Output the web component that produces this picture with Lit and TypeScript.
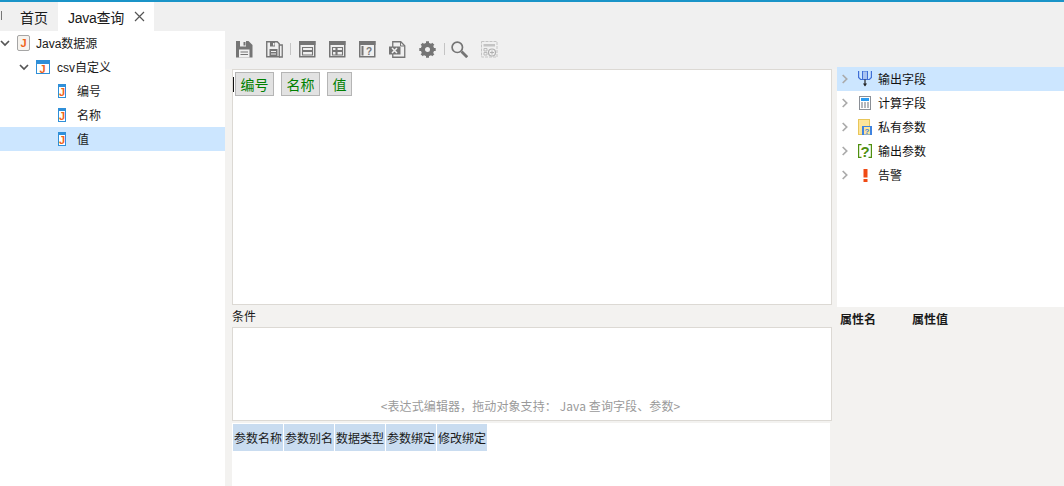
import { LitElement, html, css, svg } from "lit";
import { customElement } from "lit/decorators.js";

const chev = (open: boolean, c = "#555") => html`<svg class="chev" width="10" height="10" viewBox="0 0 10 10"><path d=${open ? "M1 3l4 4 4-4" : "M2.7 1l4 4-4 4"} fill="none" stroke=${c} stroke-width="1.7"/></svg>`;

const jDoc = html`<svg width="14" height="16" viewBox="0 0 14 16"><rect x=".5" y=".5" width="12" height="15" rx="1.5" fill="#f6f3ee" stroke="#a5a5a5"/><text x="6.5" y="11.5" text-anchor="middle" class="j">J</text></svg>`;
const jTable = html`<svg width="14" height="14" viewBox="0 0 14 14"><rect x=".5" y=".5" width="13" height="13" fill="#fff" stroke="#2f8fd8"/><rect x="1" y="1" width="12" height="3" fill="#2f8fd8"/><text x="6.5" y="12.5" text-anchor="middle" class="j">J</text></svg>`;
const jField = html`<svg width="8" height="14" viewBox="0 0 8 14"><rect x=".5" y=".5" width="7" height="13" fill="#fff" stroke="#2f8fd8"/><rect x="1" y="1" width="6" height="2" fill="#2f8fd8"/><text x="4" y="12" text-anchor="middle" class="j">J</text></svg>`;

const G = "#757575";
const L = "#f0f0f0";
const tb = (body: unknown) => html`<svg width="17" height="17" viewBox="0 0 17 17">${body}</svg>`;
const titled = (inner: unknown) => svg`<rect x=".75" y=".75" width="15" height="15" fill="none" stroke="${G}" stroke-width="1.5"/><rect x="0" y="0" width="16.5" height="4" fill="${G}"/>${inner}`;
const save = tb(svg`<path d="M0 0h12.5L16.5 4v12.5H0z" fill="${G}"/><path d="M4 0h6v5.5H4z" fill="${L}"/><path d="M7.5 1h2v3.5h-2z" fill="${G}"/><path d="M3 8.5h10.5v8H3z" fill="${L}"/><path d="M4.5 11h7.5M4.5 13.5h7.5" stroke="${G}" stroke-width="1.2"/>`);
const saveAs = tb(svg`<path d="M.75.75h10.5l2 2v13h-12.5z" fill="${L}" stroke="${G}" stroke-width="1.4"/><path d="M13 4h3.25v12H13" fill="none" stroke="${G}" stroke-width="1.3"/><path d="M4 1h5v4.5H4zM3.5 8h8v7.5h-8z" fill="${G}"/><path d="M7 2h1.5v2.5H7z" fill="${L}"/><path d="M5 10.5h5M5 13h5" stroke="${L}" stroke-width="1.1"/>`);
const win1 = tb(titled(svg`<path d="M3.5 6.5h10v3h-10zM3.5 10.5h10v3.5h-10z" fill="none" stroke="${G}" stroke-width="1.1"/>`));
const win2 = tb(titled(svg`<path d="M3.5 6.5h3.5v3H3.5zM3.5 10.5h3.5v3.5H3.5zM8 6.5h5.5v3H8zM8 10.5h5.5v3.5H8z" fill="none" stroke="${G}" stroke-width="1.1"/>`));
const win3 = tb(titled(svg`<path d="M3.5 5v9.5" stroke="${G}" stroke-width="2"/><text x="10" y="14" text-anchor="middle" class="tq">?</text>`));
const xls = tb(svg`<path d="M3.75.75h8l4 4v11.5h-12z" fill="${L}" stroke="${G}" stroke-width="1.3"/><path d="M11.5 1v4h4" fill="none" stroke="${G}"/><rect x="0" y="5.5" width="11.5" height="8" fill="${G}"/><path d="M3 7l5 5M8 7l-5 5" stroke="${L}" stroke-width="1.5"/>`);
const gear = tb(svg`<circle cx="8.5" cy="8.5" r="4.6" fill="none" stroke="${G}" stroke-width="4.2"/><path d="M8.5 .3v3.4M8.5 13.3v3.4M.3 8.5h3.4M13.3 8.5h3.4M2.7 2.7l2.4 2.4M11.9 11.9l2.4 2.4M14.3 2.7l-2.4 2.4M5.1 11.9l-2.4 2.4" stroke="${G}" stroke-width="3"/>`);
const search = tb(svg`<circle cx="6.3" cy="6.3" r="5.2" fill="none" stroke="${G}" stroke-width="1.7"/><path d="M10.5 10.5l5.7 5.7" stroke="${G}" stroke-width="2.8"/>`);
const addDis = tb(svg`<rect x=".5" y=".5" width="15.5" height="15.5" fill="none" stroke="#c4c4c4" stroke-dasharray="3 1"/><rect x="2.5" y="3" width="11.5" height="2.5" fill="#c4c4c4"/><path d="M3 7.5h3v2.5H3zM3 11.5h3V14H3z" fill="none" stroke="#bbb"/><circle cx="11" cy="11.5" r="3.5" fill="${L}" stroke="#b0b0b0" stroke-width="1.2"/><path d="M9 11.5h4M11 9.5v4" stroke="#b0b0b0"/>`);

const outIcon = html`<svg width="14" height="16" viewBox="0 0 14 16"><path d="M.6 0v6.5l2 2h8.8l2-2V0" fill="none" stroke="#3f6fd6" stroke-width="1.2"/><rect x="4.5" y="0" width="5" height="8.5" fill="#a9c3f0" stroke="#3f6fd6"/><path d="M7 8.5v6" stroke="#222" stroke-width="1.2"/><path d="M5 12.5l2 3 2-3z" fill="#222"/></svg>`;
const calcIcon = html`<svg width="12" height="14" viewBox="0 0 12 14"><rect x=".5" y=".5" width="11" height="13" fill="#fff" stroke="#8a8f96"/><rect x="2" y="2" width="8" height="3" fill="#2c9cf0"/><path d="M2 7h2M5 7h2M8 7h2M2 9h2M5 9h2M8 9h2M2 11h2M5 11h2M8 11h2" stroke="#6a7078"/></svg>`;
const privIcon = html`<svg width="14" height="16" viewBox="0 0 14 16"><rect x=".5" y=".5" width="11" height="15" fill="#fde59a" stroke="#e8c65a"/><rect x="4" y="7" width="10" height="9" fill="#3f83e0"/><rect x="6" y="8" width="6" height="7.5" fill="#fde59a"/><text x="9" y="14.5" text-anchor="middle" class="q">?</text></svg>`;
const outParam = html`<svg width="14" height="18" viewBox="0 -2 14 18"><path d="M3.5 .6H.6v12.8h2.9M10.5 .6h2.9v12.8h-2.9" fill="none" stroke="#4f9010" stroke-width="1.2"/><text x="7" y="12.5" text-anchor="middle" class="qg">?</text></svg>`;
const warn = html`<svg width="5" height="13" viewBox="0 0 5 13"><rect x=".5" y="0" width="4" height="8.5" fill="#f04a14"/><rect x=".5" y="10" width="4" height="3" fill="#f04a14"/></svg>`;

@customElement("app-root")
export class AppRoot extends LitElement {
  static styles = css`
    :host { display: block; width: 1064px; height: 486px; overflow: hidden; background: #f3f2f0; font-family: "Noto Sans CJK SC", "Liberation Sans", sans-serif; font-size: 12px; color: #1a1a1a; }
    text.j { font: bold 11px "Liberation Sans", sans-serif; fill: #f0641a; }
    text.q { font: bold 8px "Liberation Sans", sans-serif; fill: #3f83e0; }
    text.qg { font: bold 15px "Liberation Sans", sans-serif; fill: #4f9010; }
    text.tq { font: bold 10px "Liberation Sans", sans-serif; fill: #757575; }
    .tabs { height: 29px; border-top: 2px solid #1a94c8; background: #f0f0f0; display: flex; font-size: 14px; box-sizing: content-box; }
    .sep { width: 1px; height: 9px; background: #777; margin: 9px 0 0 1px; }
    .tab { height: 29px; display: flex; align-items: center; box-sizing: border-box; }
    .home { padding: 0 10px 0 18px; }
    .cur { background: #fff; width: 96px; padding-left: 10px; gap: 10px; }
    .cur span { font-family: "Liberation Sans", "Noto Sans CJK SC", sans-serif; letter-spacing: -.25px; }
    .main { display: flex; height: 455px; }
    .tree { width: 225px; background: #fff; flex: none; }
    .row { height: 24px; display: flex; align-items: center; font-size: 12px; box-sizing: border-box; }
    .row span { position: relative; top: -1px; }
    .r0 .chev { margin-right: 7px; }
    .r0 svg + svg { margin-right: 5px; }
    .r1 { padding-left: 19px; }
    .r1 .chev { margin-right: 7px; }
    .r1 svg + svg { margin-right: 7px; }
    .r2 { padding-left: 58px; }
    .r2 svg { margin-right: 11px; }
    .lat { font-family: "Liberation Sans", "Noto Sans CJK SC", sans-serif; }
    .sel { background: #cce6ff; }
    .center { width: 600px; margin-left: 7px; flex: none; display: flex; flex-direction: column; }
    .toolbar { height: 38px; display: flex; align-items: center; background: #f0f0f0; margin-left: -7px; padding: 0 0 2px 11px; box-sizing: border-box; width: 1064px; }
    .tool { width: 30px; height: 17px; flex: none; }
    .tsep { width: 1px; height: 12px; background: #c4c4c4; flex: none; }
    .s1 { margin: 0 8px 0 -6px; }
    .s2 { margin: 0 6px 0 -5px; }
    .editor { height: 236px; box-sizing: border-box; background: #fff; border: 1px solid #dcd9d4; display: flex; gap: 7px; padding: 2px 0 0 2px; align-items: flex-start; position: relative; }
    .caret { position: absolute; left: 0; top: 7px; width: 1px; height: 15px; background: #111; }
    .chip { height: 24px; padding: 0 4.5px; box-sizing: border-box; background: #e2e2e2; border: 1px solid #b5b5b5; color: #008000; font-size: 14px; display: flex; align-items: center; line-height: 1; }
    .lbl { height: 22px; display: flex; align-items: center; font-size: 12px; box-sizing: border-box; padding-bottom: 2px; }
    .expr { height: 94px; box-sizing: border-box; background: #fff; border: 1px solid #dcd9d4; display: flex; align-items: flex-end; justify-content: center; font-size: 12px; line-height: 16px; color: #9a9a9a; padding: 0 3px 6px 0; letter-spacing: .1px; }
    .params { margin-top: 2px; flex: 1; background: #fff; width: 598px; display: flex; gap: 1px; align-items: flex-start; padding: 1px 0 0 1px; box-sizing: border-box; }
    .ph { width: 50px; height: 27px; background: #c9dcf0; display: flex; align-items: center; justify-content: center; font-size: 12px; white-space: nowrap; }
    .right { margin-left: 5px; flex: 1; display: flex; flex-direction: column; margin-top: 36px; z-index: 1; }
    .rtree { height: 240px; background: #fff; }
    .rrow { height: 24px; padding-left: 3px; display: flex; align-items: center; font-size: 12px; color: #111; }
    .rrow .ic { width: 16px; height: 18px; display: flex; align-items: center; justify-content: center; margin: 0 5px 0 7px; flex: none; }
    .rrow span.t { position: relative; top: -1px; }
    .props { flex: 1; display: flex; padding: 3px 0 0 3px; font-weight: 700; font-size: 12px; gap: 36px; align-items: flex-start; }
  `;

  render() {
    const rows: [unknown, string][] = [
      [outIcon, "输出字段"], [calcIcon, "计算字段"], [privIcon, "私有参数"], [outParam, "输出参数"], [warn, "告警"],
    ];
    return html`
      <div class="tabs">
        <div class="sep"></div>
        <div class="tab home">首页</div>
        <div class="tab cur"><span>Java查询</span>
          <svg width="11" height="11" viewBox="0 0 11 11"><path d="M1 1l9 9M10 1l-9 9" stroke="#555" stroke-width="1.2"/></svg></div>
      </div>
      <div class="main">
        <div class="tree">
          <div class="row r0">${chev(true)}${jDoc}<span class="lat">Java数据源</span></div>
          <div class="row r1">${chev(true)}${jTable}<span class="lat">csv自定义</span></div>
          <div class="row r2">${jField}<span>编号</span></div>
          <div class="row r2">${jField}<span>名称</span></div>
          <div class="row r2 sel">${jField}<span>值</span></div>
        </div>
        <div class="center">
          <div class="toolbar">
            <div class="tool">${save}</div><div class="tool">${saveAs}</div><div class="tsep s1"></div>
            <div class="tool">${win1}</div><div class="tool">${win2}</div><div class="tool">${win3}</div><div class="tool">${xls}</div><div class="tool">${gear}</div>
            <div class="tsep s2"></div><div class="tool">${search}</div><div class="tool">${addDis}</div>
          </div>
          <div class="editor"><div class="caret"></div>
            <div class="chip">编号</div><div class="chip">名称</div><div class="chip">值</div></div>
          <div class="lbl">条件</div>
          <div class="expr">&lt;表达式编辑器，拖动对象支持： Java 查询字段、参数&gt;</div>
          <div class="params">
            <div class="ph">参数名称</div><div class="ph">参数别名</div><div class="ph">数据类型</div><div class="ph">参数绑定</div><div class="ph">修改绑定</div>
          </div>
        </div>
        <div class="right">
          <div class="rtree">
            ${rows.map(([ic, t], i) => html`<div class="rrow ${i === 0 ? "sel" : ""}">${chev(false, "#aaa")}<span class="ic">${ic}</span><span class="t">${t}</span></div>`)}
          </div>
          <div class="props"><span>属性名</span><span>属性值</span></div>
        </div>
      </div>
    `;
  }
}
